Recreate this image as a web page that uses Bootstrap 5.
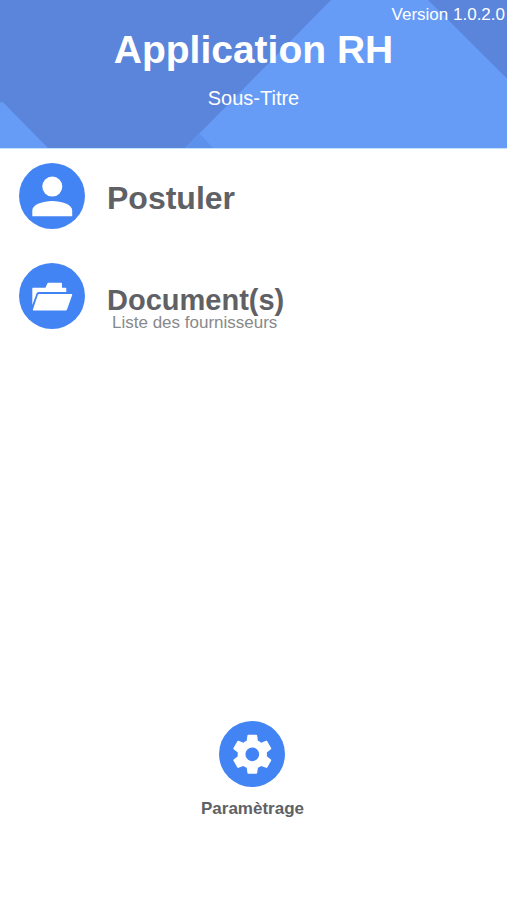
<!DOCTYPE html>
<html lang="fr">
<head>
<meta charset="utf-8">
<meta name="viewport" content="width=device-width, initial-scale=1">
<title>Application RH</title>
<link href="https://cdn.jsdelivr.net/npm/bootstrap@5.3.0/dist/css/bootstrap.min.css" rel="stylesheet">
<style>
  body { font-family: "Liberation Sans", Arial, sans-serif; color: #5f6165; background: #fff; }
  .app-header { background: #669bf6; padding: 5px 1px 38px; border-bottom: 1px solid #c3e2fb; }
  .header-art { z-index: 0; }
  .app-version { font-size: 17px; line-height: 20px; padding-right: 1px; }
  .app-title { font-size: 39px; line-height: 50px; }
  .app-subtitle { font-size: 20px; line-height: 24px; margin-top: 11px; }
  .menu { padding: 14px 19px; gap: 34px; }
  .entry { gap: 22px; color: inherit; }
  .entry-icon { width: 66px; height: 66px; }
  .entry-title { font-size: 32px; line-height: 36px; padding-top: 3px; }
  .entry-title-sm { font-size: 29px; line-height: 30px; padding-top: 22px; }
  .entry-note { font-size: 17px; line-height: 16px; color: #88898c; padding-left: 5px; }
  .app-footer { padding-right: 2px; }
  .settings { font-size: 17px; line-height: 20px; gap: 12px; color: inherit; margin-bottom: 81px; }
</style>
</head>
<body>
<div class="d-flex flex-column min-vh-100">
  <header class="app-header position-relative text-white text-center">
    <svg class="header-art position-absolute top-0 start-0 w-100 h-100" viewBox="0 0 507 149" preserveAspectRatio="none" aria-hidden="true">
      <path fill="#5b84db" d="M0 0H331L185 149H48L3 103H0Z"/>
      <path fill="#5b84db" d="M428 0H507V79Z"/>
      <path fill="#5e91eb" d="M199 134L213 149H185Z"/>
    </svg>
    <div class="position-relative">
      <div class="app-version text-end">Version 1.0.2.0</div>
      <h1 class="app-title fw-bold mb-0">Application RH</h1>
      <p class="app-subtitle mb-0">Sous-Titre</p>
    </div>
  </header>

  <main class="menu d-flex flex-column">
    <a href="#postuler" class="entry d-flex align-items-center text-decoration-none">
      <svg class="entry-icon flex-shrink-0" viewBox="0 0 66 66" aria-hidden="true">
        <circle cx="33" cy="33" r="33" fill="#4384f4"/>
        <circle cx="33.300" cy="23.600" r="10" fill="#fff"/>
        <path fill="#fff" d="M13.300 53.300V47.500C13.300 41.500 24 38 33.300 38S53.200 41.500 53.200 47.500V53.300Z"/>
      </svg>
      <span class="entry-title fw-bold">Postuler</span>
    </a>
    <a href="#documents" class="entry d-flex align-items-start text-decoration-none">
      <svg class="entry-icon flex-shrink-0" viewBox="0 0 66 66" aria-hidden="true">
        <circle cx="33" cy="33" r="33" fill="#4384f4"/>
        <path fill="#fff" d="M13.300 42V25Q13.300 24.800 14 24.800H26.500L28.300 20.500Q28.700 19.700 29.700 19.700H42Q43 19.700 43 20.700V24.800H46.500Q47.300 24.800 47.300 25.800V29H19.500Q18 29 17.500 30.500Z"/>
        <path fill="#fff" d="M20 31H52.500Q53.500 31 53.200 32L48 46.500Q47.700 47.500 46.500 47.500H14.500Q13.500 47.500 13.900 46.500L18.800 32Q19.200 31 20 31Z"/>
      </svg>
      <span class="d-flex flex-column">
        <span class="entry-title-sm fw-bold">Document(s)</span>
        <span class="entry-note">Liste des fournisseurs</span>
      </span>
    </a>
  </main>

  <footer class="app-footer mt-auto d-flex justify-content-center">
    <a href="#parametrage" class="settings d-flex flex-column align-items-center text-decoration-none fw-bold">
      <svg class="entry-icon" viewBox="0 0 66 66" aria-hidden="true">
        <circle cx="33" cy="33" r="33" fill="#4384f4"/>
        <path fill="#fff" transform="translate(9.900 9.900) scale(1.950)" d="M19.430 12.980c.04-.32.07-.64.07-.98s-.03-.66-.07-.98l2.110-1.650c.19-.15.24-.42.12-.64l-2-3.460c-.12-.22-.39-.3-.61-.22l-2.490 1c-.52-.4-1.080-.73-1.690-.98l-.38-2.650C14.460 2.180 14.250 2 14 2h-4c-.25 0-.46.18-.49.42l-.38 2.650c-.61.25-1.170.59-1.690.98l-2.490-1c-.23-.09-.49 0-.61.22l-2 3.460c-.13.22-.07.49.12.64l2.110 1.650c-.04.32-.07.65-.07.98s.03.66.07.98l-2.110 1.650c-.19.15-.24.42-.12.64l2 3.460c.12.22.39.3.61.22l2.490-1c.52.4 1.080.73 1.690.98l.38 2.650c.03.24.24.42.49.42h4c.25 0 .46-.18.49-.42l.38-2.650c.61-.25 1.170-.59 1.690-.98l2.490 1c.23.09.49 0 .61-.22l2-3.460c.12-.22.07-.49-.12-.64l-2.110-1.650zM12 15.500c-1.930 0-3.500-1.570-3.500-3.500s1.570-3.500 3.500-3.500 3.500 1.570 3.500 3.500-1.570 3.500-3.500 3.500z"/>
      </svg>
      <span>Paramètrage</span>
    </a>
  </footer>
</div>
<script src="https://cdn.jsdelivr.net/npm/bootstrap@5.3.0/dist/js/bootstrap.bundle.min.js"></script>
</body>
</html>
